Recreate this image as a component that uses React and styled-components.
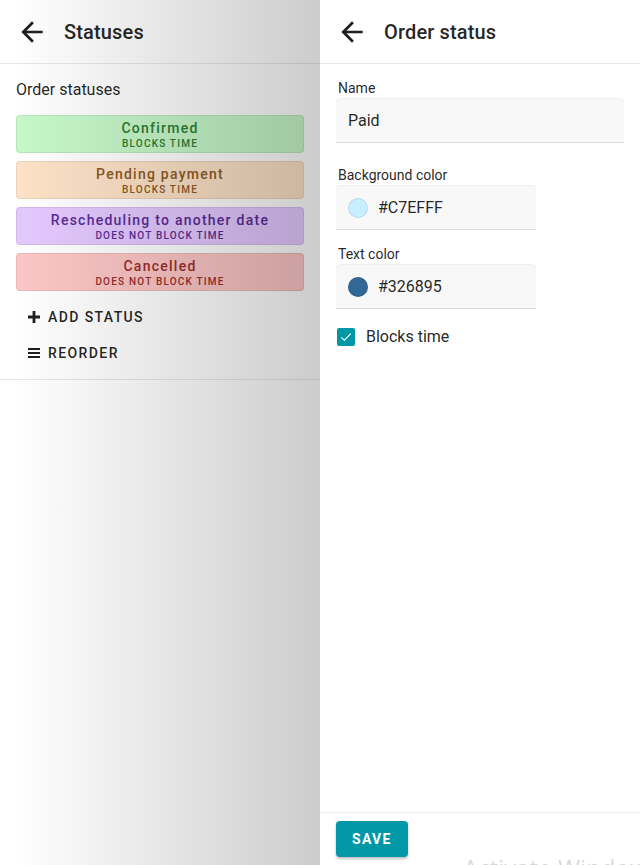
import React, { useState } from "react";
import styled, { createGlobalStyle } from "styled-components";

const GlobalStyle = createGlobalStyle`
  html, body {
    margin: 0;
    padding: 0;
    background: #fff;
    font-family: Roboto, "Liberation Sans", Arial, sans-serif;
    color: rgba(0, 0, 0, 0.87);
  }
  * { box-sizing: border-box; }
`;

const Page = styled.div`
  display: flex;
  height: 100vh;
  overflow: hidden;
  position: relative;
`;

const Pane = styled.div`
  position: relative;
  display: flex;
  flex-direction: column;
  width: ${(p) => p.width || "auto"};
  flex: ${(p) => (p.grow ? 1 : "none")};
  background: #fff;
`;

const Scrim = styled.div`
  position: absolute;
  inset: 0;
  pointer-events: none;
  background: linear-gradient(
    to right,
    rgba(0, 0, 0, 0) 4%,
    rgba(0, 0, 0, 0.2) 100%
  );
`;

const Header = styled.div`
  height: 64px;
  flex: none;
  display: flex;
  align-items: center;
  padding-left: 16px;
  gap: 16px;
  border-bottom: 1px solid #e8e8e8;
`;

const Title = styled.h1`
  margin: 0;
  font-size: 20px;
  font-weight: 500;
  letter-spacing: 0.15px;
  color: rgba(0, 0, 0, 0.87);
`;

const IconButton = styled.button`
  border: none;
  background: none;
  padding: 0;
  width: 32px;
  height: 32px;
  display: flex;
  align-items: center;
  justify-content: center;
  cursor: pointer;
`;

const Section = styled.div`
  padding: 16px 16px 8px;
  border-bottom: 1px solid #e8e8e8;
`;

const SectionTitle = styled.div`
  font-size: 16px;
  line-height: 20px;
  margin: 0 0 15px;
`;

const ChipList = styled.div`
  display: flex;
  flex-direction: column;
  gap: 8px;
  margin-bottom: 8px;
`;

const Chip = styled.div`
  height: 38px;
  border-radius: 4px;
  background: ${(p) => p.bg};
  color: ${(p) => p.fg};
  border: 1px solid rgba(0, 0, 0, 0.07);
  display: flex;
  flex-direction: column;
  align-items: center;
  justify-content: center;
  text-align: center;
  padding-top: 1px;
`;

const ChipName = styled.span`
  font-size: 14px;
  font-weight: 500;
  letter-spacing: 1.25px;
  line-height: 18px;
`;

const ChipNote = styled.span`
  font-size: 10px;
  font-weight: 500;
  letter-spacing: 1.2px;
  line-height: 13px;
  text-transform: uppercase;
`;

const TextButton = styled.button`
  display: flex;
  align-items: center;
  gap: 7px;
  height: 36px;
  padding: 0 11px;
  border: none;
  background: none;
  font-family: inherit;
  font-size: 14px;
  font-weight: 500;
  letter-spacing: 1.4px;
  text-transform: uppercase;
  color: rgba(0, 0, 0, 0.87);
  cursor: pointer;
`;

const Form = styled.div`
  flex: 1;
  padding: 16px 16px 0;
  display: flex;
  flex-direction: column;
`;

const Field = styled.div`
  display: flex;
  flex-direction: column;
  margin-bottom: ${(p) => p.gapBelow || "24px"};
  width: ${(p) => p.width || "100%"};
`;

const Label = styled.label`
  font-size: 14px;
  line-height: 16px;
  padding-left: 2px;
  margin-bottom: 3px;
`;

const InputBox = styled.div`
  height: 44px;
  display: flex;
  align-items: center;
  gap: 10px;
  padding: 0 12px;
  background: #f8f8f8;
  border-radius: 4px 4px 0 0;
  border-bottom: 1px solid #dcdcdc;
  box-shadow: 0 -1px 0 #f0f0f0;
  font-size: 16px;
`;

const Swatch = styled.span`
  width: 20px;
  height: 20px;
  border-radius: 50%;
  background: ${(p) => p.color};
  border: 1px solid rgba(0, 0, 0, 0.08);
  flex: none;
`;

const CheckRow = styled.label`
  display: flex;
  align-items: center;
  gap: 11px;
  font-size: 16px;
  margin-top: 2px;
  padding-left: 1px;
  cursor: pointer;
`;

const Box = styled.span`
  width: 18px;
  height: 18px;
  border-radius: 2px;
  background: ${(p) => (p.checked ? "#0097a7" : "#fff")};
  border: ${(p) => (p.checked ? "none" : "2px solid #757575")};
  display: flex;
  align-items: center;
  justify-content: center;
`;

const Footer = styled.div`
  flex: none;
  height: 53px;
  border-top: 1px solid #ececec;
  padding: 8px 16px;
`;

const SaveButton = styled.button`
  height: 36px;
  padding: 0 16px;
  border: none;
  border-radius: 4px;
  background: #0097a7;
  color: #fff;
  font-family: inherit;
  font-size: 14px;
  font-weight: 700;
  letter-spacing: 1.3px;
  box-shadow: 0 2px 3px rgba(0, 0, 0, 0.25);
  cursor: pointer;
`;

const Watermark = styled.div`
  position: absolute;
  left: 463px;
  top: 853px;
  font-family: "Open Sans", "Liberation Sans", sans-serif;
  font-size: 24px;
  line-height: 30px;
  color: rgba(0, 0, 0, 0.17);
  white-space: nowrap;
  pointer-events: none;
`;

const BackArrow = () => (
  <svg width="32" height="32" viewBox="0 0 24 24">
    <path
      d="M20 11H7.83l5.59-5.59L12 4l-8 8 8 8 1.41-1.41L7.83 13H20v-2z"
      fill="#1f1f1f"
    />
  </svg>
);

const PlusIcon = () => (
  <svg width="14" height="14" viewBox="0 0 14 14">
    <path d="M5.6 1h2.8v4.6H13v2.8H8.4V13H5.6V8.4H1V5.6h4.6z" fill="#1f1f1f" />
  </svg>
);

const MenuIcon = () => (
  <svg width="14" height="14" viewBox="0 0 14 14">
    <path d="M1 2h12v2H1zM1 6h12v2H1zM1 10h12v2H1z" fill="#1f1f1f" />
  </svg>
);

const statuses = [
  { name: "Confirmed", note: "Blocks time", bg: "#c6f8c9", fg: "#2e7d32" },
  { name: "Pending payment", note: "Blocks time", bg: "#fde2c7", fg: "#8d5a26" },
  {
    name: "Rescheduling to another date",
    note: "Does not block time",
    bg: "#e4c9ff",
    fg: "#5a2d96",
  },
  { name: "Cancelled", note: "Does not block time", bg: "#fcc6c6", fg: "#9b2f2c" },
];

const App = () => {
  const [blocks, setBlocks] = useState(true);

  return (
    <Page>
      <GlobalStyle />
      <Pane width="320px">
        <Header>
          <IconButton>
            <BackArrow />
          </IconButton>
          <Title>Statuses</Title>
        </Header>
        <Section>
          <SectionTitle>Order statuses</SectionTitle>
          <ChipList>
            {statuses.map((s) => (
              <Chip key={s.name} bg={s.bg} fg={s.fg}>
                <ChipName>{s.name}</ChipName>
                <ChipNote>{s.note}</ChipNote>
              </Chip>
            ))}
          </ChipList>
          <TextButton>
            <PlusIcon />
            Add status
          </TextButton>
          <TextButton>
            <MenuIcon />
            Reorder
          </TextButton>
        </Section>
        <Scrim />
      </Pane>

      <Pane grow>
        <Header>
          <IconButton>
            <BackArrow />
          </IconButton>
          <Title>Order status</Title>
        </Header>
        <Form>
          <Field>
            <Label>Name</Label>
            <InputBox>Paid</InputBox>
          </Field>
          <Field width="200px" gapBelow="16px">
            <Label>Background color</Label>
            <InputBox>
              <Swatch color="#c7efff" />
              #C7EFFF
            </InputBox>
          </Field>
          <Field width="200px" gapBelow="16px">
            <Label>Text color</Label>
            <InputBox>
              <Swatch color="#326895" />
              #326895
            </InputBox>
          </Field>
          <CheckRow onClick={() => setBlocks((v) => !v)}>
            <Box checked={blocks}>
              {blocks && (
                <svg width="14" height="14" viewBox="0 0 24 24">
                  <path
                    d="M9 16.17 4.83 12l-1.42 1.41L9 19 21 7l-1.41-1.41z"
                    fill="#fff"
                  />
                </svg>
              )}
            </Box>
            Blocks time
          </CheckRow>
        </Form>
        <Footer>
          <SaveButton>SAVE</SaveButton>
        </Footer>
      </Pane>
      <Watermark>Activate Windows</Watermark>
    </Page>
  );
};

export default App;
